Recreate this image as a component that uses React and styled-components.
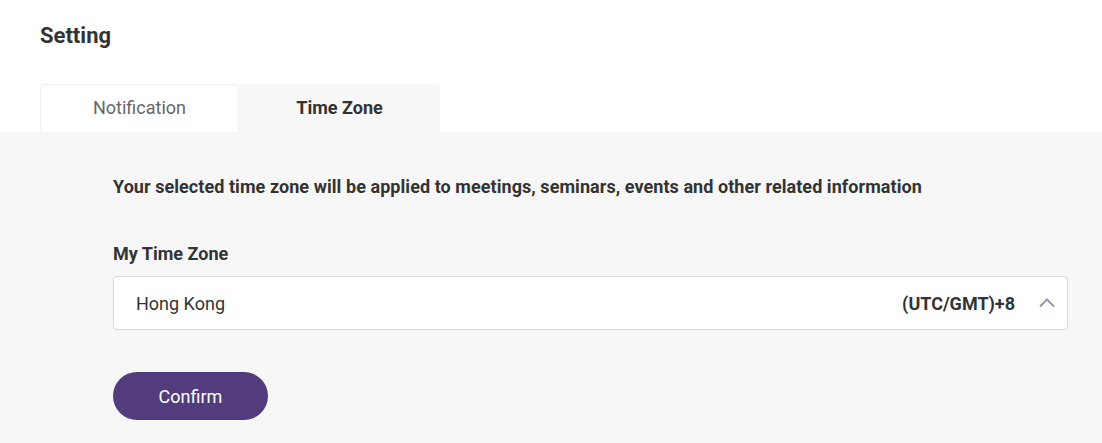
import React, { useState } from 'react'
import styled, { createGlobalStyle } from 'styled-components'

const GlobalStyle = createGlobalStyle`
  body {
    margin: 0;
    background: #fff;
    font-family: Roboto, "Liberation Sans", sans-serif;
    color: #333;
  }
`

const Page = styled.div`
  display: flex;
  flex-direction: column;
  height: 443px;
`

const Header = styled.div`
  padding: 0 40px;
  height: 84px;
  display: flex;
  flex-direction: column;
`

const Title = styled.h1`
  margin: 23px 0 0;
  font-size: 22px;
  line-height: 26px;
  font-weight: 700;
  color: #333;
`

const Tabs = styled.div`
  display: flex;
  padding: 0 40px;
`

const Tab = styled.button`
  width: ${p => p.$w}px;
  height: 48px;
  border: ${p => (p.$active ? 'none' : '1px solid #f0f0f0')};
  border-bottom: none;
  border-radius: 4px 4px 0 0;
  background: ${p => (p.$active ? '#f7f7f7' : '#fff')};
  font-family: inherit;
  font-size: 18px;
  font-weight: ${p => (p.$active ? 700 : 400)};
  color: ${p => (p.$active ? '#333' : '#666')};
  cursor: pointer;
  padding: 0 0 2px;
`

const Panel = styled.div`
  flex: 1;
  background: #f7f7f7;
  padding: 44px 34px 0 113px;
`

const Intro = styled.p`
  margin: 0;
  font-size: 18px;
  line-height: 22px;
  font-weight: 700;
  letter-spacing: 0.06px;
`

const Label = styled.div`
  margin-top: 45px;
  font-size: 18px;
  line-height: 22px;
  font-weight: 700;
`

const Select = styled.div`
  margin-top: 11px;
  height: 54px;
  box-sizing: border-box;
  background: #fff;
  border: 1px solid #d9d9d9;
  border-radius: 4px;
  display: flex;
  align-items: center;
  padding: 0 11px 0 22px;
  font-size: 18px;
`

const City = styled.span`
  flex: 1;
`

const Offset = styled.span`
  font-weight: 700;
  font-size: 18px;
  margin-right: 23px;
`

const Button = styled.button`
  margin-top: 42px;
  width: 155px;
  height: 48px;
  border: none;
  border-radius: 24px;
  background: #533c7d;
  color: #fff;
  font-family: inherit;
  font-size: 18px;
  cursor: pointer;
`

const Chevron = () => (
  <svg width="18" height="18" viewBox="0 0 18 18" fill="none">
    <path d="M2 12.5L9 5.5L16 12.5" stroke="#949aa6" strokeWidth="2" />
  </svg>
)

export default function App() {
  const [tab, setTab] = useState('tz')
  return (
    <Page>
      <GlobalStyle />
      <Header>
        <Title>Setting</Title>
      </Header>
      <Tabs>
        <Tab $w={199} $active={tab === 'notif'} onClick={() => setTab('notif')}>Notification</Tab>
        <Tab $w={201} $active={tab === 'tz'} onClick={() => setTab('tz')}>Time Zone</Tab>
      </Tabs>
      <Panel>
        <Intro>Your selected time zone will be applied to meetings, seminars, events and other related information</Intro>
        <Label>My Time Zone</Label>
        <Select>
          <City>Hong Kong</City>
          <Offset>(UTC/GMT)+8</Offset>
          <Chevron />
        </Select>
        <Button>Confirm</Button>
      </Panel>
    </Page>
  )
}
